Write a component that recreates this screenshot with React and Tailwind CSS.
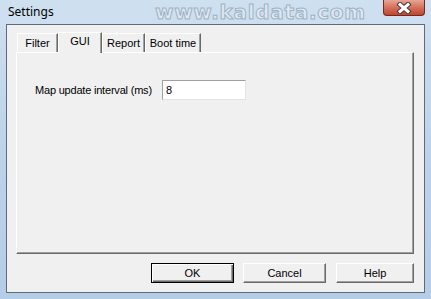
export default function App() {
  const tabs = ['Filter', 'GUI', 'Report', 'Boot time']
  const widths = { Filter: 'w-[41px]', GUI: 'w-[44px]', Report: 'w-[43px]', 'Boot time': 'w-[56px]' }

  return (
    <div className="w-[431px] h-[299px] overflow-hidden flex flex-col bg-gradient-to-b from-[#cfe0f0] via-[#bcd3ea] to-[#b5cde6] font-['Liberation_Sans',Arial,sans-serif] text-[11px] text-black">
      {/* Title bar */}
      <div className="h-[24px] flex items-start relative">
        <div className="pl-[8px] pt-[4px] text-[12px] font-['Noto_Sans',sans-serif] leading-[16px]">Settings</div>
        <div className="absolute left-[155px] top-[1px] text-[20px] font-bold tracking-[0.7px] leading-[22px] font-['DejaVu_Sans',sans-serif] text-[#dde8f2] [-webkit-text-stroke:1px_#9fb2c4]">
          www.kaldata.com
        </div>
        <div className="absolute left-[383px] top-0 w-[42px] h-[16px] rounded-b-[4px] border border-t-0 border-[#6e2a20] bg-gradient-to-b from-[#e8a595] via-[#d4705d] to-[#c0442c] flex items-center justify-center">
          <svg width="16" height="12" viewBox="0 0 16 12">
            <path d="M4 2.5 L12 9.5 M12 2.5 L4 9.5" stroke="#4a3a3a" strokeWidth="5" strokeLinecap="square" />
            <path d="M4 2.5 L12 9.5 M12 2.5 L4 9.5" stroke="#ffffff" strokeWidth="3" strokeLinecap="square" />
          </svg>
        </div>
      </div>

      {/* Client area */}
      <div className="ml-[6px] w-[419px] h-[269px] border border-[#5f6b78] bg-[#f0f0f0] flex flex-col">
        <div className="pl-[10px] pt-[7px] flex items-end h-[27px]">
          {tabs.map(t => {
            const sel = t === 'GUI'
            return (
              <div
                key={t}
                className={`${widths[t]} ${sel ? 'h-[21px] -mb-px z-10 bg-[#f0f0f0] pb-[4px]' : 'h-[19px] bg-[#f0f0f0] pt-[1px]'} border-l border-t border-l-white border-t-white border-r border-r-[#696969] shadow-[inset_-1px_0_0_#a0a0a0] flex items-center justify-center`}
              >
                {t}
              </div>
            )
          })}
        </div>
        <div className="ml-[9px] w-[398px] h-[202px] border border-l-white border-t-white border-r-[#696969] border-b-[#696969] shadow-[inset_-1px_-1px_0_#a0a0a0] pl-[18px] pt-[27px]">
          <div className="flex items-center">
            <span className="w-[127px] tracking-[-0.2px]">Map update interval (ms)</span>
            <div className="w-[84px] h-[20px] bg-white border border-[#a0a0a0] border-b-[#e3e3e3] border-r-[#e3e3e3] flex items-center pl-[3px]">
              8
            </div>
          </div>
        </div>
        <div className="flex justify-start pl-[144px] pt-[9px] gap-[9px]">
          <button className="w-[83px] h-[20px] border border-black bg-[#f0f0f0] shadow-[inset_1px_1px_0_#fff,inset_-1px_-1px_0_#696969,inset_-2px_-2px_0_#a0a0a0] text-[11px]">
            OK
          </button>
          <button className="w-[83px] h-[20px] bg-[#f0f0f0] border border-t-white border-l-white border-r-[#696969] border-b-[#696969] shadow-[inset_-1px_-1px_0_#a0a0a0] text-[11px]">
            Cancel
          </button>
          <button className="w-[78px] h-[20px] ml-[1px] bg-[#f0f0f0] border border-t-white border-l-white border-r-[#696969] border-b-[#696969] shadow-[inset_-1px_-1px_0_#a0a0a0] text-[11px]">
            Help
          </button>
        </div>
      </div>
    </div>
  )
}
